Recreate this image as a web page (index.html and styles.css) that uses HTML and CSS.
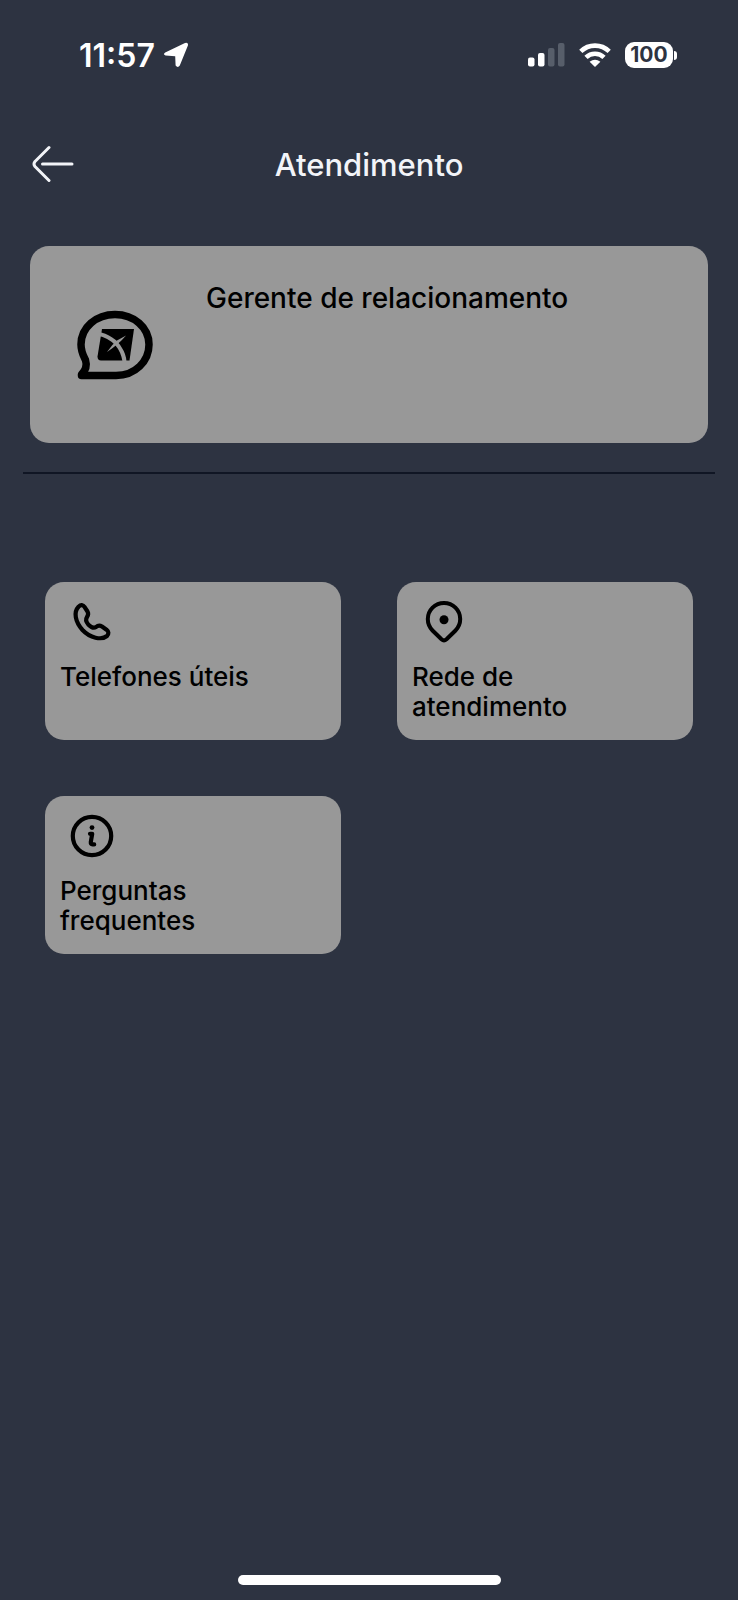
FILE: index.html
```html
<!DOCTYPE html>
<html lang="pt-BR">
<head>
    <meta charset="UTF-8">
    <meta name="viewport" content="width=device-width, initial-scale=1.0">
    <title>Atendimento</title>
    <link rel="stylesheet" href="styles.css">
</head>
<body>
    <div class="status-bar">
        <div class="status-time">
            <span>11:57</span>
            <svg width="26" height="26" viewBox="0 0 26 26" aria-hidden="true">
                <path d="M2.2 10.400 22 1Q25.600 0 24.900 3.600L16.800 23.600Q14.800 26.500 12.600 23.600L12.200 14.200 2.600 13.600Q-.6 12.400 2.200 10.400Z" fill="#fff"/>
            </svg>
        </div>
        <div class="status-icons">
            <svg width="37" height="24" viewBox="0 0 37 24" aria-hidden="true">
                <rect x="0" y="14.500" width="6.500" height="9" rx="2" fill="#fff"/>
                <rect x="10" y="10" width="6.500" height="13.500" rx="2" fill="#fff"/>
                <rect x="20" y="5" width="6.500" height="18.500" rx="2" fill="#575e6a"/>
                <rect x="30" y="0" width="6.500" height="23.500" rx="2" fill="#575e6a"/>
            </svg>
            <svg width="32" height="24" viewBox="0 0 32 24" aria-hidden="true">
                <g fill="none" stroke="#fff" stroke-width="4.600">
                    <path d="M1.800 8.400a20.300 20.300 0 0 1 28.400 0"/>
                    <path d="M7 14.400a12.800 12.800 0 0 1 18 0"/>
                </g>
                <path d="M16 24 10.600 18.800q5.400-4.300 10.800 0Z" fill="#fff"/>
            </svg>
            <div class="battery">
                <span class="battery-level">100</span>
                <span class="battery-tip"></span>
            </div>
        </div>
    </div>

    <header class="header">
        <button class="back-button" aria-label="Voltar">
            <svg width="42" height="38" viewBox="0 0 42 38" fill="none" stroke="#f2f4f8" stroke-width="3" stroke-linecap="round" stroke-linejoin="round" aria-hidden="true">
                <path d="M17 2.500 3 16.500q-2 2.500 0 5L17 35.500M10.500 19H40"/>
            </svg>
        </button>
        <h1>Atendimento</h1>
    </header>

    <main>
        <button class="manager-card">
            <svg class="manager-icon" width="76" height="70" viewBox="0 0 76 70" aria-hidden="true">
                <path d="M4.500 65.500H39C58 65.500 72 51.500 72 34.500S57 4.500 38 4.500 4 17.500 4 34.500C4 42 6.500 46 8.500 50Q11 58 4.500 64.500Z" fill="none" stroke="#000" stroke-width="7.500" stroke-linejoin="round"/>
                <path d="M25 19H57L52.500 50.500H24Q20.500 50.500 20.500 46.500Z" fill="#000"/>
                <path d="M20 21.500Q38 25 45 38 49 44 49.500 51.500H45.500Q44 42 38.500 35.500 32 28 20 25.500Z" fill="#989898"/>
                <path d="M49 25.500Q42 34 30 42 35 34.500 40 30.500Z" fill="#989898"/>
            </svg>
            <span class="manager-title">Gerente de relacionamento</span>
        </button>

        <hr class="divider">

        <div class="options">
            <button class="option">
                <svg width="44" height="44" viewBox="0 0 44 44" fill="none" stroke="#000" stroke-width="4.200" stroke-linecap="round" stroke-linejoin="round" aria-hidden="true">
                    <path d="M8.500 6.700Q12 3.300 14.800 7.300L17.500 11.500Q19 14 17 17C15 20 16 22 18.500 24.700 21.500 27.700 23.500 28.800 26 27Q28.800 24.500 32 26.500L36.500 29.700Q40 32.500 37 36C31.500 40.500 20 38 12.500 30 5 21.500 3.500 12 8.500 6.700Z"/>
                </svg>
                <span>Telefones úteis</span>
            </button>
            <button class="option">
                <svg width="44" height="44" viewBox="0 0 44 44" aria-hidden="true">
                    <path d="M10.500 30.500A16.200 16.200 0 1 1 33.500 30.500L24.500 39.200Q22 41.400 19.500 39.200Z" fill="none" stroke="#000" stroke-width="4" stroke-linejoin="round"/>
                    <circle cx="22" cy="19.800" r="4.500" fill="#000"/>
                </svg>
                <span>Rede de atendimento</span>
            </button>
            <button class="option">
                <svg width="44" height="44" viewBox="0 0 44 44" fill="none" stroke="#000" stroke-linecap="round" stroke-linejoin="round" aria-hidden="true">
                    <circle cx="22" cy="22" r="19.200" stroke-width="4.200"/>
                    <circle cx="22" cy="13.600" r="2.400" fill="#000" stroke="none"/>
                    <path d="M20 19.800H22.200L20.800 28Q20.500 30.400 22.500 30.400H24.200" stroke-width="4.200"/>
                </svg>
                <span>Perguntas frequentes</span>
            </button>
        </div>
    </main>

    <div class="home-indicator"></div>
</body>
</html>
```
FILE: styles.css
```css
* {
    box-sizing: border-box;
}

body {
    margin: 0;
    min-height: 100vh;
    display: flex;
    flex-direction: column;
    background-color: #2d3341;
    color: #f2f4f8;
    font-family: 'Inter', 'Liberation Sans', sans-serif;
}

button {
    border: none;
    padding: 0;
    font-family: inherit;
    color: #000;
    cursor: pointer;
}

svg {
    display: block;
    flex-shrink: 0;
}

/* Status bar */
.status-bar {
    height: 110px;
    padding: 0 61px 0 79px;
    display: flex;
    align-items: center;
    justify-content: space-between;
    color: #fff;
}

.status-time {
    display: flex;
    align-items: center;
    gap: 8px;
    font-size: 32px;
    font-weight: 600;
}

.status-icons {
    display: flex;
    align-items: center;
    gap: 14px;
}

.battery {
    display: flex;
    align-items: center;
    gap: 1px;
}

.battery-level {
    width: 48px;
    border-radius: 9px;
    background-color: #fff;
    color: #2d3341;
    font-size: 21px;
    font-weight: 700;
    line-height: 26px;
    text-align: center;
}

.battery-tip {
    width: 3px;
    height: 9px;
    border-radius: 0 4px 4px 0;
    background-color: #fff;
}

/* Header */
.header {
    height: 108px;
    padding: 0 32px;
    display: grid;
    grid-template-columns: 42px 1fr 42px;
    align-items: center;
}

.header h1 {
    margin: 0;
    font-size: 31px;
    font-weight: 500;
    text-align: center;
}

.back-button {
    background: none;
}

/* Main content */
main {
    flex: 1;
    padding-top: 28px;
}

.manager-card {
    width: calc(100% - 60px);
    min-height: 197px;
    margin: 0 30px;
    padding: 37px 47px;
    display: flex;
    gap: 53px;
    border-radius: 19px;
    background-color: #989898;
    text-align: left;
}

.manager-icon {
    align-self: center;
}

.manager-title {
    align-self: flex-start;
    font-size: 28px;
    font-weight: 500;
    line-height: 30px;
}

.divider {
    height: 2px;
    margin: 29px 23px 0;
    border: none;
    background-color: #101624;
}

.options {
    padding: 108px 45px 56px;
    display: grid;
    grid-template-columns: 1fr 1fr;
    gap: 56px;
}

.option {
    min-height: 158px;
    padding: 18px 100px 18px 15px;
    display: flex;
    flex-direction: column;
    align-items: flex-start;
    gap: 18px;
    border-radius: 19px;
    background-color: #989898;
    font-size: 26px;
    font-weight: 500;
    line-height: 30px;
    text-align: left;
}

.option svg {
    margin-left: 10px;
}

.option:first-child {
    padding-right: 15px;
}

.home-indicator {
    width: 263px;
    height: 10px;
    margin: 0 auto 15px;
    border-radius: 5px;
    background-color: #fff;
}
```
